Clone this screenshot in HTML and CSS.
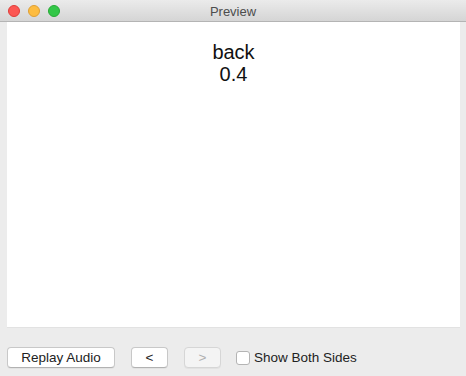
FILE: index.html
```html
<!DOCTYPE html>
<html lang="en">
<head>
    <meta charset="UTF-8">
    <title>Preview</title>
    <link rel="stylesheet" href="styles.css">
</head>
<body>

<div class="window">
    <div class="titlebar">
        <div class="lights">
            <span class="light red"></span>
            <span class="light yellow"></span>
            <span class="light green"></span>
        </div>
        <div class="title">Preview</div>
    </div>

    <div class="card-area">
        <div class="card-text">back<br>0.4</div>
    </div>

    <div class="toolbar">
        <button class="btn replay">Replay Audio</button>
        <button class="btn nav">&lt;</button>
        <button class="btn nav" disabled>&gt;</button>
        <label class="both-sides"><span class="check"></span>Show Both Sides</label>
    </div>
</div>

</body>
</html>
```

FILE: styles.css
```css
html, body {
    height: 100%;
    margin: 0;
    padding: 0;
    font-family: "Liberation Sans", Arial, sans-serif;
    overflow: hidden;
}

.window {
    height: 100%;
    display: flex;
    flex-direction: column;
    background: #ececec;
}

.titlebar {
    height: 21px;
    position: relative;
    background: linear-gradient(#ebebeb, #d5d5d5);
    border-bottom: 1px solid #b4b4b4;
    display: flex;
    align-items: center;
    justify-content: center;
}

.lights {
    position: absolute;
    left: 8px;
    top: 5px;
    display: flex;
    gap: 8px;
}

.light {
    width: 12px;
    height: 12px;
    border-radius: 50%;
    box-sizing: border-box;
}

.red { background: #fc5753; border: 1px solid #df3d39; }
.yellow { background: #fdbc40; border: 1px solid #de9f34; }
.green { background: #33c748; border: 1px solid #27aa35; }

.title {
    font-size: 13px;
    color: #4d4d4d;
    padding-top: 1px;
}

.card-area {
    margin: 0 6px 0 7px;
    height: 305px;
    background: #fff;
    border-bottom: 1px solid #e2e2e2;
    text-align: center;
}

.card-text {
    padding-top: 19px;
    font-size: 20px;
    line-height: 22px;
    color: #111;
}

.toolbar {
    display: flex;
    align-items: center;
    padding: 19px 0 0 7px;
}

.btn {
    font-family: "Liberation Sans", Arial, sans-serif;
    font-size: 13.5px;
    height: 21px;
    background: #fff;
    border: 1px solid #c8c8c8;
    border-bottom-color: #b2b2b2;
    border-radius: 4px;
    color: #222;
    padding: 0;
    box-shadow: 0 1px 0 rgba(0,0,0,0.04);
}

.replay {
    width: 108px;
    margin-right: 16px;
}

.nav {
    width: 37px;
    margin-right: 16px;
}

.nav:disabled {
    background: #f4f4f4;
    color: #b0b0b0;
    border-color: #d6d6d6;
    margin-right: 15px;
}

.both-sides {
    display: flex;
    align-items: center;
    font-size: 13.5px;
    color: #222;
}

.check {
    width: 14px;
    height: 14px;
    box-sizing: border-box;
    background: #fff;
    border: 1px solid #b4b4b4;
    border-radius: 3px;
    margin-right: 4px;
}
```
